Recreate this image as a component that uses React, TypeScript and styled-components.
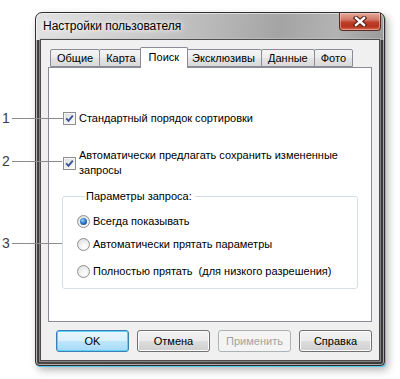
import React from 'react'
import styled, { createGlobalStyle } from 'styled-components'

const GlobalStyle = createGlobalStyle`
  html, body {
    margin: 0;
    padding: 0;
    background: #ffffff;
  }
  body {
    font-family: 'Liberation Sans', Arial, sans-serif;
    font-size: 11px;
    color: #000;
  }
`

const Stage = styled.div`
  position: relative;
  width: 400px;
  height: 379px;
  overflow: hidden;
  box-sizing: border-box;
  padding: 12px 0 0 35px;
  background: #fff;
`

const Window = styled.div`
  width: 350px;
  height: 354px;
  box-sizing: border-box;
  display: flex;
  flex-direction: column;
  padding: 0 4px 4px 4px;
  border: 1px solid #2f2f2f;
  border-radius: 7px 7px 4px 4px;
  background:
    linear-gradient(100deg, #e2e2e2 0%, #cdcdcd 28%, #b9b9b9 50%, #a4a4a4 70%, #b3b3b3 86%, #9a9a9a 100%) top / 100% 27px no-repeat,
    linear-gradient(90deg, #6e6e6e 0px, #3a3636 2px, #4f4545 4px, #3d3a3a 100%);
  box-shadow:
    inset 0 0 0 1px rgba(255, 255, 255, 0.55),
    1px 1px 0 #52c8f0,
    3px 4px 9px rgba(0, 0, 0, 0.3);
`

const TitleBar = styled.div`
  height: 26px;
  flex: none;
  display: flex;
  align-items: flex-start;
  padding-left: 3px;
`

const Title = styled.span`
  font-size: 12px;
  line-height: 14px;
  margin-top: 6px;
  color: #000;
  text-shadow: 0 0 5px #fff, 0 0 8px rgba(255, 255, 255, 0.9);
`

const CloseButton = styled.div`
  margin-left: auto;
  margin-right: -1px;
  width: 42px;
  height: 18px;
  box-sizing: border-box;
  border: 1px solid #5c2a22;
  border-top: none;
  border-radius: 0 0 4px 4px;
  display: flex;
  align-items: center;
  justify-content: center;
  background: linear-gradient(180deg, #e7aa9c 0%, #d27665 40%, #bc3f2a 55%, #b8341f 80%, #d56b50 100%);
  box-shadow: inset 0 0 0 1px rgba(255, 220, 210, 0.45);
`

const Client = styled.div`
  flex: 1;
  display: flex;
  flex-direction: column;
  padding: 7px 7px 0 7px;
  background: #f0f0f0;
  border: 1px solid #4d4d4d;
  box-shadow: 0 0 0 1px rgba(200, 200, 200, 0.5);
`

const TabStrip = styled.div`
  height: 20px;
  display: flex;
  align-items: flex-end;
  padding-left: 2px;
  position: relative;
  z-index: 1;
`

const Tab = styled.div<{ $active?: boolean }>`
  box-sizing: border-box;
  height: ${p => (p.$active ? '21px' : '18px')};
  margin: ${p => (p.$active ? '0 -2px -1px -3px' : '0 0 0 -1px')};
  padding: ${p => (p.$active ? '2px 8px 0 8px' : '1px 6px 0 6px')};
  border: 1px solid #898c95;
  border-bottom: ${p => (p.$active ? 'none' : '1px solid #898c95')};
  border-radius: 2px 2px 0 0;
  background: ${p =>
    p.$active
      ? '#ffffff'
      : 'linear-gradient(180deg, #f4f4f4 0%, #ececec 50%, #e3e3e3 51%, #dadada 100%)'};
  position: relative;
  z-index: ${p => (p.$active ? 2 : 0)};
  line-height: 14px;
  white-space: nowrap;
  color: #000;
  &:first-child {
    margin-left: 0;
  }
`

const Panel = styled.div`
  height: 255px;
  box-sizing: border-box;
  border: 1px solid #898c95;
  background: #ffffff;
  padding: 43px 0 0 14px;
  display: flex;
  flex-direction: column;
  align-items: flex-start;
`

const CheckRow = styled.label<{ $gap?: number }>`
  display: flex;
  align-items: center;
  gap: 3px;
  margin-top: ${p => p.$gap ?? 0}px;
  line-height: 15px;
`

const CheckBox = styled.span`
  width: 13px;
  height: 13px;
  flex: none;
  box-sizing: border-box;
  border: 1px solid #8e8f8f;
  background: linear-gradient(135deg, #dcdcdc 0%, #f0f0f0 60%, #ffffff 100%);
  box-shadow: inset 0 0 0 1px #f6f6f6;
  display: flex;
  align-items: center;
  justify-content: center;
`

const Group = styled.fieldset`
  margin: 12px 0 0 -1px;
  width: 296px;
  box-sizing: border-box;
  height: 99px;
  padding: 11px 0 0 14px;
  border: 1px solid #d5dfe5;
  border-radius: 3px;
  display: flex;
  flex-direction: column;
  align-items: flex-start;
`

const Legend = styled.legend`
  margin-left: 8px;
  padding: 0 3px 0 1px;
  line-height: 13px;
  color: #000;
`

const RadioRow = styled.label<{ $gap: number }>`
  display: flex;
  align-items: center;
  gap: 3px;
  margin-top: ${p => p.$gap}px;
  line-height: 14px;
`

const RadioDot = styled.span<{ $on?: boolean }>`
  width: 13px;
  height: 13px;
  flex: none;
  box-sizing: border-box;
  border-radius: 50%;
  border: 1px solid #8f8f8f;
  background: radial-gradient(circle at 60% 70%, #ffffff 0%, #f2f2f2 40%, #d6d6d6 100%);
  display: flex;
  align-items: center;
  justify-content: center;
  &::after {
    content: '';
    display: ${p => (p.$on ? 'block' : 'none')};
    width: 7px;
    height: 7px;
    border-radius: 50%;
    background: radial-gradient(circle at 40% 35%, #a9dcff 0%, #3c8ad6 35%, #1a4f8a 80%, #123d6c 100%);
  }
`

const ButtonRow = styled.div`
  display: flex;
  justify-content: flex-end;
  gap: 8px;
  margin-top: 8px;
`

const Button = styled.div<{ $variant?: 'default' | 'disabled' }>`
  width: 73px;
  height: 22px;
  box-sizing: border-box;
  border-radius: 3px;
  display: flex;
  align-items: center;
  justify-content: center;
  border: 1px solid
    ${p => (p.$variant === 'default' ? '#3c7fb1' : p.$variant === 'disabled' ? '#adb2b5' : '#707070')};
  color: ${p => (p.$variant === 'disabled' ? '#a3a3a3' : '#000')};
  background: ${p =>
    p.$variant === 'default'
      ? 'linear-gradient(180deg, #eaf6fd 0%, #d9f0fc 50%, #bee6fd 51%, #a7d9f5 100%)'
      : p.$variant === 'disabled'
      ? '#f4f4f4'
      : 'linear-gradient(180deg, #f2f2f2 0%, #ebebeb 50%, #dddddd 51%, #cfcfcf 100%)'};
  box-shadow: ${p =>
    p.$variant === 'default'
      ? 'inset 0 0 0 1px #5fd0f7'
      : p.$variant === 'disabled'
      ? 'none'
      : 'inset 0 0 0 1px #fbfbfb'};
`

const Callout = styled.div<{ $top: number }>`
  position: absolute;
  left: 2px;
  top: ${p => p.$top}px;
  height: 16px;
  display: flex;
  align-items: center;
  gap: 2px;
  z-index: 5;
`

const CalloutNum = styled.span`
  width: 8px;
  text-align: center;
  font-size: 14px;
  line-height: 16px;
  color: #3c3c3c;
`

const CalloutLine = styled.span<{ $width: number }>`
  width: ${p => p.$width}px;
  height: 1px;
  background: #8c8c8c;
`

const CheckMark = () => (
  <svg width="9" height="9" viewBox="0 0 9 9">
    <path d="M1.2 4.4 L3.5 6.8 L7.8 1.6" fill="none" stroke="#3a5597" strokeWidth="1.9" />
  </svg>
)

const CloseGlyph = () => (
  <svg width="14" height="11" viewBox="0 0 14 11">
    <path d="M3 2 L11 9 M11 2 L3 9" stroke="#4b1c14" strokeWidth="4.4" strokeLinecap="square" />
    <path d="M3 2 L11 9 M11 2 L3 9" stroke="#ffffff" strokeWidth="2.4" strokeLinecap="square" />
  </svg>
)

const tabs = ['Общие', 'Карта', 'Поиск', 'Эксклюзивы', 'Данные', 'Фото']

export default function App() {
  return (
    <Stage>
      <GlobalStyle />
      <Window>
        <TitleBar>
          <Title>Настройки пользователя</Title>
          <CloseButton>
            <CloseGlyph />
          </CloseButton>
        </TitleBar>
        <Client>
          <TabStrip>
            {tabs.map(t => (
              <Tab key={t} $active={t === 'Поиск'}>
                {t}
              </Tab>
            ))}
          </TabStrip>
          <Panel>
            <CheckRow>
              <CheckBox>
                <CheckMark />
              </CheckBox>
              Стандартный порядок сортировки
            </CheckRow>
            <CheckRow $gap={22}>
              <CheckBox>
                <CheckMark />
              </CheckBox>
              <span>
                Автоматически предлагать сохранить измененные
                <br />
                запросы
              </span>
            </CheckRow>
            <Group>
              <Legend>Параметры запроса:</Legend>
              <RadioRow $gap={0}>
                <RadioDot $on />
                Всегда показывать
              </RadioRow>
              <RadioRow $gap={9}>
                <RadioDot />
                Автоматически прятать параметры
              </RadioRow>
              <RadioRow $gap={13}>
                <RadioDot />
                Полностью прятать&nbsp; (для низкого разрешения)
              </RadioRow>
            </Group>
          </Panel>
          <ButtonRow>
            <Button $variant="default">OK</Button>
            <Button>Отмена</Button>
            <Button $variant="disabled">Применить</Button>
            <Button>Справка</Button>
          </ButtonRow>
        </Client>
      </Window>
      <Callout $top={110}>
        <CalloutNum>1</CalloutNum>
        <CalloutLine $width={51} />
      </Callout>
      <Callout $top={153}>
        <CalloutNum>2</CalloutNum>
        <CalloutLine $width={50} />
      </Callout>
      <Callout $top={235}>
        <CalloutNum>3</CalloutNum>
        <CalloutLine $width={50} />
      </Callout>
    </Stage>
  )
}
